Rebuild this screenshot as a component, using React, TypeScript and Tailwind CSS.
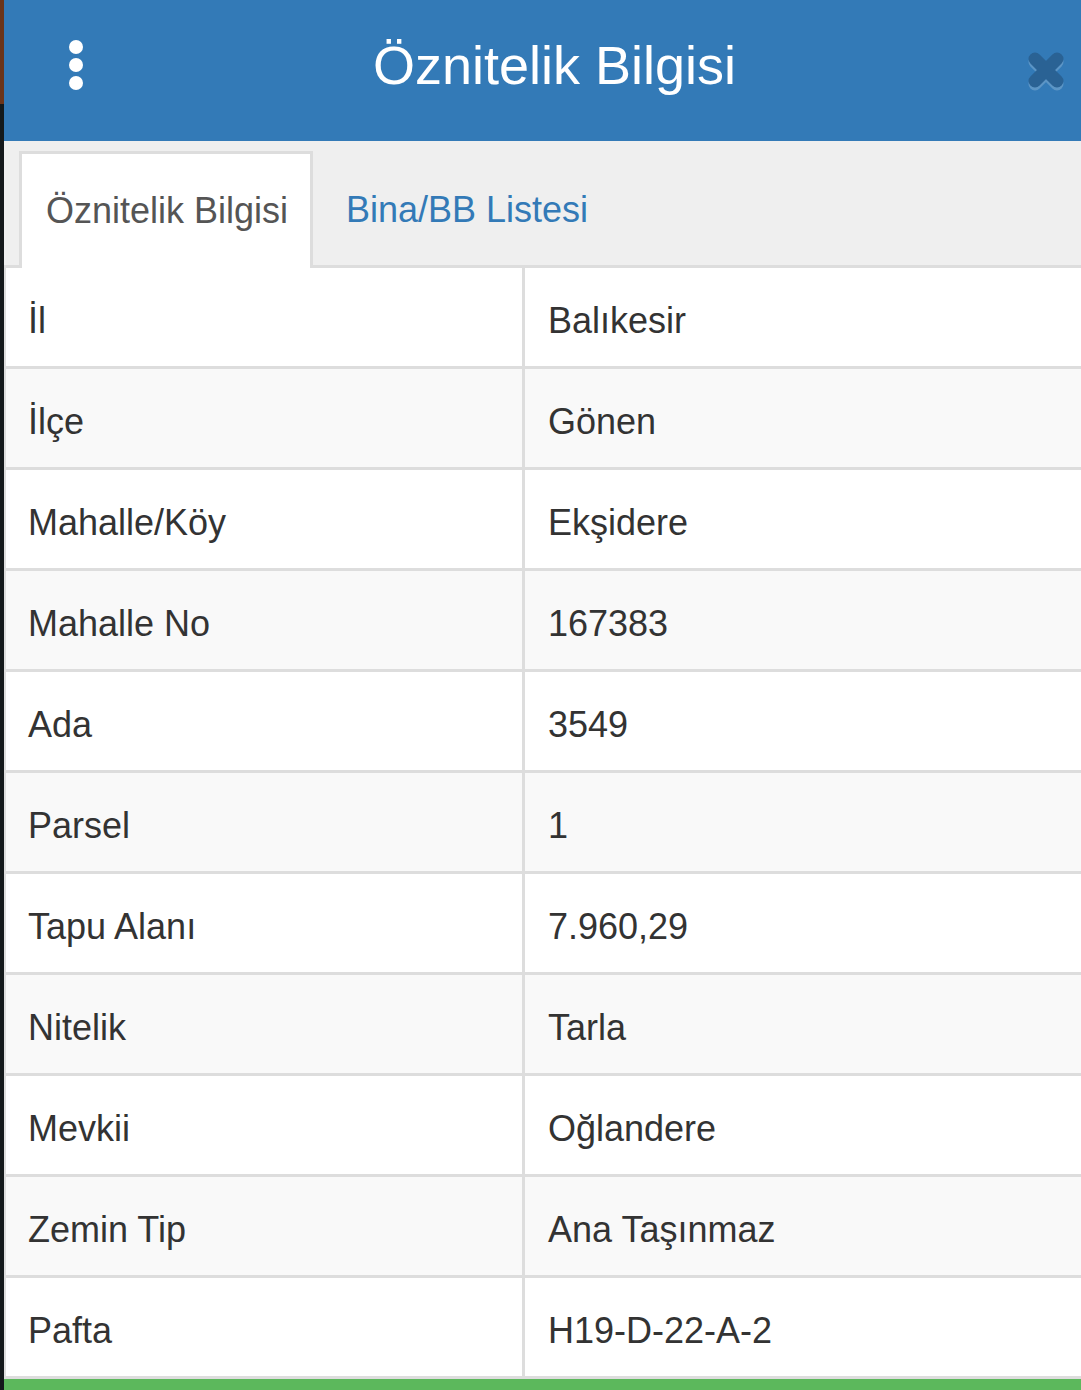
import React from 'react';

const rows: [string, string][] = [
  ['İl', 'Balıkesir'],
  ['İlçe', 'Gönen'],
  ['Mahalle/Köy', 'Ekşidere'],
  ['Mahalle No', '167383'],
  ['Ada', '3549'],
  ['Parsel', '1'],
  ['Tapu Alanı', '7.960,29'],
  ['Nitelik', 'Tarla'],
  ['Mevkii', 'Oğlandere'],
  ['Zemin Tip', 'Ana Taşınmaz'],
  ['Pafta', 'H19-D-22-A-2'],
];

function CloseIcon() {
  const d = 'M7 7 L29 29 M29 7 L7 29';
  return (
    <svg width="40" height="42" viewBox="0 0 40 42">
      <path d={d} transform="translate(0 3)" stroke="#5c95c5" strokeWidth="13" strokeLinecap="round" fill="none" />
      <path d={d} stroke="#2a6294" strokeWidth="13" strokeLinecap="round" fill="none" />
    </svg>
  );
}

export default function App() {
  return (
    <div
      className="w-[1081px] h-[1390px] overflow-hidden flex bg-white"
      style={{ fontFamily: '"Liberation Sans", Arial, Helvetica, sans-serif' }}
    >
      {/* dark edge of the page behind the modal */}
      <div className="w-[4px] shrink-0 flex flex-col">
        <div className="h-[104px] bg-[#6b3419]" />
        <div className="flex-1 bg-[#14191b]" />
      </div>

      <div className="flex-1 flex flex-col min-w-0">
        {/* header */}
        <div className="h-[141px] bg-[#337ab7] flex items-center pb-[12px]">
          <div className="w-[130px] pl-[65px] flex flex-col gap-[4px]">
            <span className="w-[14px] h-[14px] rounded-full bg-white" />
            <span className="w-[14px] h-[14px] rounded-full bg-white" />
            <span className="w-[14px] h-[14px] rounded-full bg-white" />
          </div>
          <h2 className="flex-1 text-center text-white text-[54px] leading-none font-normal">
            Öznitelik Bilgisi
          </h2>
          <div className="w-[106px] pl-[53px] pt-[16px]">
            <CloseIcon />
          </div>
        </div>

        {/* tabs */}
        <div className="bg-[#efefef] pt-[10px] pl-[15px] flex border-b-[3px] border-[#dddddd] h-[127px]">
          <div className="w-[294px] h-[117px] -mb-[3px] bg-white border-[3px] border-b-0 border-[#dddddd] flex items-center pl-[24px] text-[36px] text-[#555555]">
            Öznitelik Bilgisi
          </div>
          <div className="h-[117px] flex items-center pl-[33px] text-[36px] text-[#337ab7]">
            Bina/BB Listesi
          </div>
        </div>

        {/* attribute table */}
        <div className="border-l-[2px] border-[#dddddd]">
          {rows.map(([k, v], i) => (
            <div
              key={k}
              className={`flex h-[101px] border-b-[3px] border-[#dddddd] text-[36px] text-[#333333] ${
                i % 2 === 0 ? 'bg-white' : 'bg-[#f9f9f9]'
              }`}
            >
              <div className="w-[519px] shrink-0 border-r-[3px] border-[#dddddd] flex items-center pl-[22px] pt-[8px]">
                {k}
              </div>
              <div className="flex-1 flex items-center pl-[23px] pt-[8px]">{v}</div>
            </div>
          ))}
        </div>

        <div className="flex-1 bg-[#5cb85c]" />
      </div>
    </div>
  );
}
